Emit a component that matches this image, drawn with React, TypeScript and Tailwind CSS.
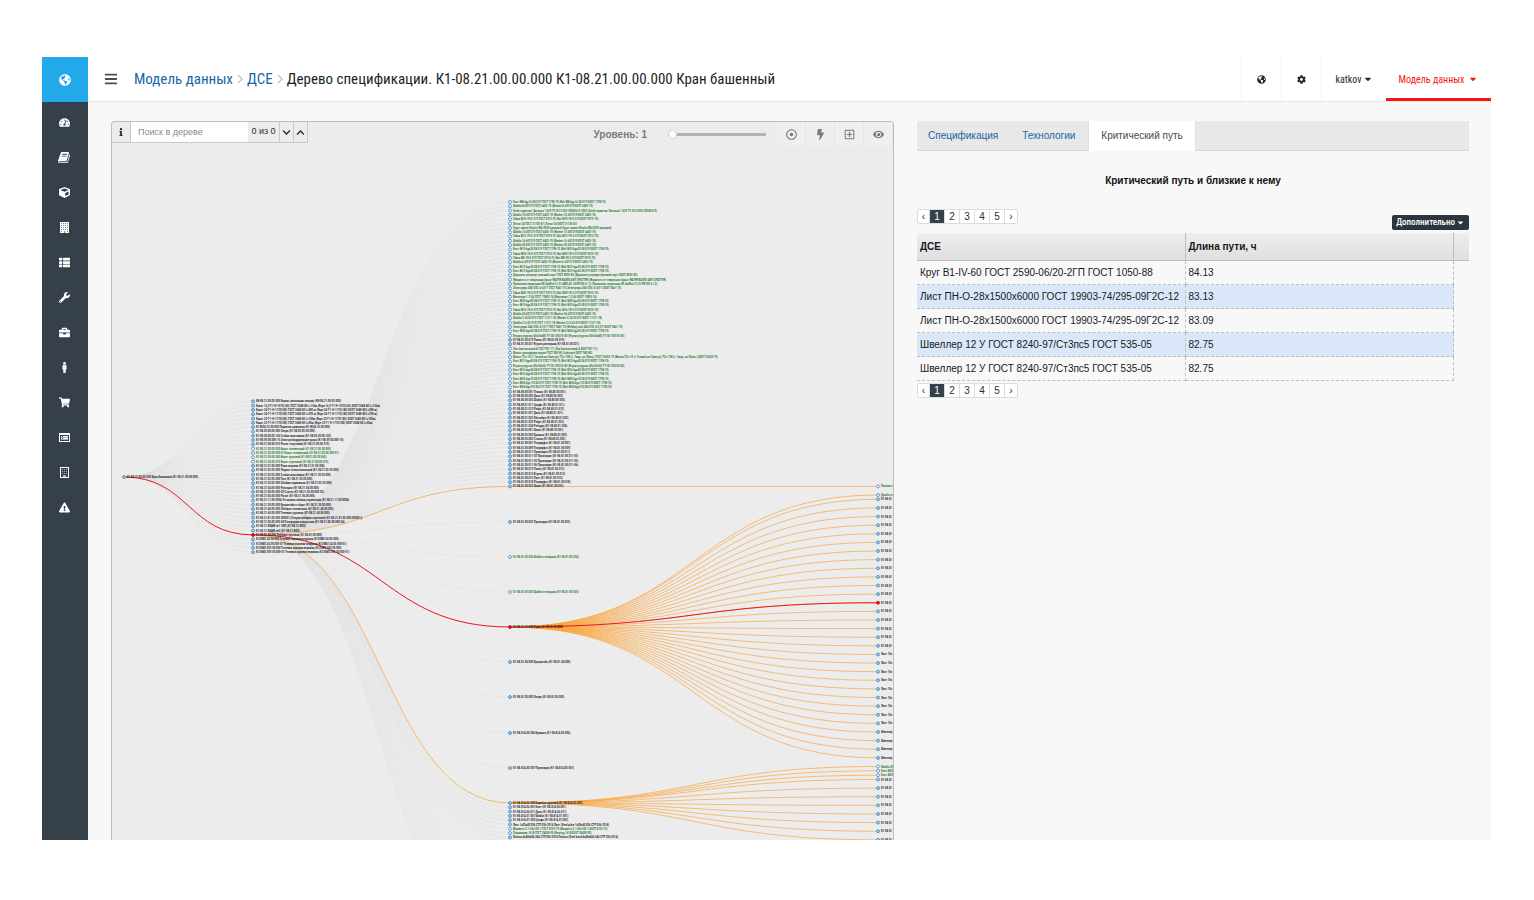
import type { ReactNode } from 'react';
import clsx from 'clsx';
import {
  FaBars,
  FaBolt,
  FaBriefcase,
  FaCaretDown,
  FaChevronDown,
  FaChevronUp,
  FaCog,
  FaCube,
  FaExclamationTriangle,
  FaEye,
  FaGlobeAmericas,
  FaInfo,
  FaMale,
  FaRegDotCircle,
  FaRegPlusSquare,
  FaShoppingCart,
  FaTachometerAlt,
  FaThList,
  FaWrench,
} from 'react-icons/fa';

function BookIcon() {
  return (
    <svg viewBox="0 0 1792 1792" width="13" height="13" fill="currentColor">
      <path d="M1639 478q40 57 18 129l-275 906q-19 64-76.5 107.5t-122.5 43.5h-923q-77 0-148.5-53.5t-99.5-131.5q-24-67-2-127 0-4 3-27t4-37q1-8-3-21.5t-3-19.5q2-11 8-21t16.5-23.5 16.5-23.5q23-38 45-91.5t30-91.5q3-10 .5-30t-.5-28q3-11 17-28t17-23q21-36 42-92t25-90q1-9-2.5-32t.5-28q4-13 22-30.5t22-22.5q19-26 42.5-84.5t27.5-96.5q1-8-3-25.5t-2-26.5q2-8 9-18t18-23 17-21q8-12 16.5-30.5t15-35 16-36 19.5-32 26.5-23.5 36-11.5 47.5 5.5l-1 3q38-9 51-9h761q74 0 114 56t18 130l-274 906q-36 119-71.5 153.5t-128.5 34.5h-869q-27 0-38 15-11 16-1 43 24 70 144 70h923q29 0 56-15.5t35-41.5l300-987q7-22 5-57 38 15 59 43zm-1064 2q-4 13 2 22.5t20 9.5h608q13 0 25.5-9.5t16.5-22.5l21-64q4-13-2-22.5t-20-9.5h-608q-13 0-25.5 9.5t-16.5 22.5zm-83 256q-4 13 2 22.5t20 9.5h608q13 0 25.5-9.5t16.5-22.5l21-64q4-13-2-22.5t-20-9.5h-608q-13 0-25.5 9.5t-16.5 22.5z" />
    </svg>
  );
}

function TowerIcon() {
  return (
    <svg viewBox="0 0 9 11" width="9" height="11" shapeRendering="crispEdges">
      <path fill="currentColor" d="M0 0h9v11H0z" />
      <path
        fill="#7b838b"
        d="M1 1h1v1H1zM3 1h1v1H3zM5 1h1v1H5zM7 1h1v1H7zM1 3h1v1H1zM3 3h1v1H3zM5 3h1v1H5zM7 3h1v1H7zM1 5h1v1H1zM3 5h1v1H3zM5 5h1v1H5zM7 5h1v1H7zM1 7h1v1H1zM3 7h1v1H3zM5 7h1v1H5zM7 7h1v1H7zM1 9h1v1H1zM4 9h1v2H4zM7 9h1v1H7z"
      />
    </svg>
  );
}

function TowerOutlineIcon() {
  return (
    <svg viewBox="0 0 9 11" width="9" height="11" shapeRendering="crispEdges">
      <path fill="none" stroke="currentColor" d="M.5.5h8v10h-8z" />
      <path
        fill="#aab0b6"
        d="M2 2h1v1H2zM4 2h1v1H4zM6 2h1v1H6zM2 4h1v1H2zM4 4h1v1H4zM6 4h1v1H6zM2 6h1v1H2zM4 6h1v1H4zM6 6h1v1H6zM3 8h3v2H3z"
      />
    </svg>
  );
}

function ListAltIcon() {
  return (
    <svg viewBox="0 0 11 9" width="11" height="9" shapeRendering="crispEdges">
      <path fill="none" stroke="currentColor" d="M.5.5h10v8H.5z" />
      <path fill="currentColor" d="M0 0h11v2H0zM2 3h1v1H2zM4 3h5v1H4zM2 5h1v1H2zM4 5h5v1H4z" />
      <path fill="#aab0b6" d="M2 4h7v1H2zM2 6h7v1H2z" />
    </svg>
  );
}

const MENU: { label: string; icon: ReactNode }[] = [
  { label: 'Панель', icon: <FaTachometerAlt /> },
  { label: 'Справочники', icon: <BookIcon /> },
  { label: 'Изделия', icon: <FaCube /> },
  { label: 'Подразделения', icon: <TowerIcon /> },
  { label: 'Списки', icon: <FaThList /> },
  { label: 'Оборудование', icon: <FaWrench /> },
  { label: 'Заказы', icon: <FaBriefcase /> },
  { label: 'Персонал', icon: <FaMale /> },
  { label: 'Закупки', icon: <FaShoppingCart /> },
  { label: 'Отчёты', icon: <ListAltIcon /> },
  { label: 'Предприятие', icon: <TowerOutlineIcon /> },
  { label: 'Предупреждения', icon: <FaExclamationTriangle /> },
];

function Sidebar() {
  return (
    <aside className="flex w-[46px] shrink-0 flex-col bg-[#36404a]">
      <a
        href="#"
        aria-label="Главная"
        className="flex h-[45px] items-center justify-center bg-[#22a9ea] pr-px text-xs text-white"
      >
        <FaGlobeAmericas />
      </a>
      <nav className="flex flex-col pt-[3px]">
        {MENU.map((item) => (
          <a
            key={item.label}
            href="#"
            aria-label={item.label}
            className="flex h-[35px] items-center justify-center pr-[2px] text-[11px] text-white"
          >
            {item.icon}
          </a>
        ))}
      </nav>
    </aside>
  );
}

function Header() {
  const cell = 'flex h-full items-center justify-center border-l border-[#f2f2f2]';
  return (
    <header className="flex h-[45px] items-center border-b border-[#e6e6e6] bg-white pl-4 font-['Roboto_Condensed',Roboto,sans-serif]">
      <button type="button" aria-label="Меню" className="text-sm text-[#4a4f57]">
        <FaBars />
      </button>
      <h1 className="ml-4 flex flex-1 items-center gap-1 text-[15px] whitespace-nowrap text-[#1a1f26]">
        <a href="#" className="text-[#1766a6]">
          Модель данных
        </a>
        <Separator />
        <a href="#" className="text-[#1766a6]">
          ДСЕ
        </a>
        <Separator />
        <span>Дерево спецификации. К1-08.21.00.00.000 К1-08.21.00.00.000 Кран башенный</span>
      </h1>
      <button type="button" aria-label="Язык" className={clsx(cell, 'w-10 text-[9px] text-[#1f2933]')}>
        <FaGlobeAmericas />
      </button>
      <button type="button" aria-label="Настройки" className={clsx(cell, 'w-10 text-[9px] text-[#1f2933]')}>
        <FaCog />
      </button>
      <button type="button" className={clsx(cell, 'w-[65px] gap-px text-[10px] text-[#1f2933]')}>
        katkov <FaCaretDown />
      </button>
      <button
        type="button"
        className="flex h-full w-[105px] items-center justify-center gap-1 border-b-3 border-[#f5180f] pt-[3px] text-[10px] text-[#f5180f]"
      >
        Модель данных <FaCaretDown />
      </button>
    </header>
  );
}

function Separator() {
  return (
    <svg viewBox="0 0 6 10" width="6" height="10" fill="none" stroke="#c4c4c4" strokeWidth="1.4">
      <path d="M1 1 5 5 1 9" />
    </svg>
  );
}

/* ---------- specification tree ---------- */

const STEP = 4.31;
const COL = { root: 12, a: 141, b: 398, c: 766 };
const ROOT_Y = 355;
const ORANGE = '#fba53c';
const RED = '#f0141e';

type Kind = 'part' | 'bought' | 'critical';
interface TreeNode {
  y: number;
  text: string;
  kind: Kind;
}

const LEVEL_A = [
  'К8-08.21.00.00.000 Башня (наклонная секция) (К8-08.21.00.00.000)',
  'Канат 16,5-Г-1-Н-1570(160) ГОСТ 2688-80 L=136м (Rope 16,5-Г-1-Н-1570(160) GOST 2688-80 L=136м)',
  'Канат 24-Г-1-Н-1770(180) ГОСТ 2688-80 L=280 м (Rope 24-Г-1-Н-1770(180) GOST 2688-80 L=280 м)',
  'Канат 24-Г-1-Н-1770(180) ГОСТ 2688-80 L=290 м (Rope 24-Г-1-Н-1770(180) GOST 2688-80 L=290 м)',
  'Канат 32-Г-1-Н-1770(180) ГОСТ 2688-80 L=100м (Rope 32-Г-1-Н-1770(180) GOST 2688-80 L=100м)',
  'Канат 32-Г-1-Н-1770(180) ГОСТ 2688-80 L=50м (Rope 32-Г-1-Н-1770(180) GOST 2688-80 L=50м)',
  'К1-ЮЭ4.10.00.000 Подвеска крюковая (К1-ЮЭ4.10.00.000)',
  'К1-08.02.00.00.000 Опора (К1-08.02.00.00.000)',
  'К1-08.05.00.00.160 Стойка монтажная (К1-08.05.00.00.160)',
  'К1-08.09.00.000-10 Электрооборудование крана (К1-08.09.00.000-10)',
  'К1-08.21.00.00.010 Рычаг стартовый (К1-08.21.00.00.010)',
  'К1-08.21.00.00.050 Канат тележечный (К1-08.21.00.00.050)',
  'К1-08.21.00.00.050-01 Канат тележечный (К1-08.21.00.00.050-01)',
  'К1-08.21.00.00.060 Канат грузовой (К1-08.21.00.00.060)',
  'К1-08.21.00.00.070 Канат стреловой (К1-08.21.00.00.070)',
  'К1-08.21.01.00.000 Рама ходовая (К1-08.21.01.00.000)',
  'К1-08.21.02.02.000 Подкос телескопический (К1-08.21.02.02.000)',
  'К1-08.21.02.03.000 Стойка монтажная (К1-08.21.02.03.000)',
  'К1-08.21.02.05.000 Тяга (К1-08.21.02.05.000)',
  'К1-08.21.03.02.000 Обойма подвижная (К1-08.21.03.02.000)',
  'К1-08.21.04.00.000 Распорка (К1-08.21.04.00.000)',
  'К1-08.21.05.00.000-02 Стрела (К1-08.21.05.00.000-02)',
  'К1-08.21.06.00.000 Рычаг (К1-08.21.06.00.000)',
  'К1-08.21.11.00.000А Установка кабины управления (К1-08.21.11.00.000А)',
  'К1-08.21.30.00.000 Кронштейн в сборе (К1-08.21.30.00.000)',
  'К1-08.21.40.00.000 Лебёдка тележечная (К1-08.21.40.00.000)',
  'К1-08.21.60.00.000 Тележка грузовая (К1-08.21.60.00.000)',
  'К1-08.21.81.00.000 (N0001) Опорка лебёдки стреловой (К1-08.21.81.00.000 (N0001))',
  'К1-08.21.85.00.000-04 Платформа поворотная (К1-08.21.85.00.000-04)',
  'К1-08.21.ЯЩИК №1 ЗИП (К1-08.21.BOX)',
  'К1-08.21.ЯЩИК №2 (К1-08.21.BOX)',
  'К1-08.81.00.000 Лебёдка грузовая (К1-08.81.00.000)',
  'К120М2.24.00.000 Тележка ходовая ведущая (К120М2.24.00.000)',
  'К120М2.24.00.000-01 Тележка ходовая ведущая (К120М2.24.00.000-01)',
  'К120М2.559.00.000 Тележка ходовая ведомая (К120М2.559.00.000)',
  'К120М2.559.00.000-01 Тележка ходовая ведомая (К120М2.559.00.000-01)',
];

const LEVEL_B = [
  'Болт М8-6gx16.58.019 ГОСТ 7798-70 (Bolt M8-6gx16.58.019 GOST 7798-70)',
  'Шайба 8.65Г.019 ГОСТ 6402-70 (Washer 8.65Г.019 GOST 6402-70)',
  'Клей-герметик "Автокон" 1625 ТУ 2513-003-50942619-2002 (Клей-герметик "Автокон" 1625 ТУ 2513-003-50942619)',
  'Шайба 10.65Г.019 ГОСТ 6402-70 (Washer 10.65Г.019 GOST 6402-70)',
  'Гайка М10-7Н.5.019 ГОСТ 5915-70 (Nut M10-7Н.5.019 GOST 5915-70)',
  'Лоток-24 ГОСТ 21150-87 (Лоток-24 GOST 21150-87)',
  'Грунт-эмаль Hicolor RAL3020 красный (Грунт-эмаль Hicolor RAL3020 красный)',
  'Шайба 12.65Г.019 ГОСТ 6402-70 (Washer 12.65Г.019 GOST 6402-70)',
  'Гайка М12-7Н.5.019 ГОСТ 5915-70 (Nut M12-7Н.5.019 GOST 5915-70)',
  'Шайба 16.65Г.019 ГОСТ 6402-70 (Washer 16.65Г.019 GOST 6402-70)',
  'Шайба 20.65Г.019 ГОСТ 6402-70 (Washer 20.65Г.019 GOST 6402-70)',
  'Болт М10-6gx20.58.019 ГОСТ 7798-70 (Bolt M10-6gx20.58.019 GOST 7798-70)',
  'Гайка М20-7Н.5.019 ГОСТ 5915-70 (Nut M20-7Н.5.019 GOST 5915-70)',
  'Гайка М8-7Н.5.019 ГОСТ 5915-70 (Nut M8-7Н.5.019 GOST 5915-70)',
  'Шайба 6.65Г.019 ГОСТ 6402-70 (Washer 6.65Г.019 GOST 6402-70)',
  'Болт М12-6gx30.58.019 ГОСТ 7798-70 (Bolt M12-6gx30.58.019 GOST 7798-70)',
  'Болт М12-6gx45.58.019 ГОСТ 7798-70 (Bolt M12-6gx45.58.019 GOST 7798-70)',
  'Двуокись углерода (высший сорт) ГОСТ 8050-85 (Двуокись углерода (высший сорт) GOST 8050-85)',
  'Жидкость от сварочных брызг WATER BASED ANTI SPATTER (Жидкость от сварочных брызг WATER BASED ANTI SPATTER)',
  'Проволока сварочная OK AutRod 12.51 AWS A5.18 ER70S-6 1,2 (Проволока сварочная OK AutRod 12.51 ER70S-6 1,2)',
  'Электроды Э46-ОЗС-4-4,0-Г ГОСТ 9467-75 (Электроды Э46-ОЗС-4-4,0-Г GOST 9467-75)',
  'Гайка М20-7Н.5.019 ГОСТ 5915-70 (Nut M20-7Н.5.019 GOST 5915-70)',
  'Масленка 1.2.Ц6 ГОСТ 19853-74 (Масленка 1.2.Ц6 GOST 19853-74)',
  'Болт М20-6gx50.58.019 ГОСТ 7798-70 (Bolt M20-6gx50.58.019 GOST 7798-70)',
  'Болт М10-6gx30.58.019 ГОСТ 7798-70 (Bolt M10-6gx30.58.019 GOST 7798-70)',
  'Гайка М16-7Н.5.019 ГОСТ 5915-70 (Nut M16-7Н.5.019 GOST 5915-70)',
  'Шайба 24.65Г.019 ГОСТ 6402-70 (Washer 24.65Г.019 GOST 6402-70)',
  'Шайба С 24.02.019 ГОСТ 11371-78 (Washer С 24.02.019 GOST 11371-78)',
  'Шайба С16.02.019 ГОСТ 11371-78 (Washer С16.02.019 GOST 11371-78)',
  'Электроды Э46-ОЗС-4-3,0-Г ГОСТ 9467-75 (Welding rods Э46-ОЗС-4-3,0-Г GOST 9467-75)',
  'Болт М24-6gx55.58.019 ГОСТ 7798-70 (Bolt M24-6gx55.58.019 GOST 7798-70)',
  'Втулка упругая (60х36х80) ТУ 38 105376-82 (Втулка упругая (60х36х80) ТУ 38 105376-82)',
  'К1-08.81.00.019 Палец (К1-08.81.00.019)',
  'К1-08.81.00.021 Втулка распорная (К1-08.81.00.021)',
  'Лак бакелитовый А ГОСТ 901-71 (Лак бакелитовый А GOST 901-71)',
  'Масло трансформаторное ГОСТ 982-80 (Lubricant GOST 982-80)',
  'Масло ТСп-10 (t. Гелиоб на t7мастр); ТСп-15К (t. 7мар. на 30сек.) ГОСТ 23652-79 (Масло ТСп-10 (t. Гелиоб на t7мастр); ТСп-15К (t. 7мар. на 30сек.) GOST 23652-79)',
  'Болт М12-6gx40.58.019 ГОСТ 7798-70 (Bolt M12-6gx40.58.019 GOST 7798-70)',
  'Втулка упругая (45х20х36) ТУ 38 105376-82 (Втулка упругая (45х20х36) ТУ 38 105376-82)',
  'Болт М16-6gx45.58.019 ГОСТ 7798-70 (Bolt M16-6gx45.58.019 GOST 7798-70)',
  'Болт М16-6gx60.58.019 ГОСТ 7798-70 (Bolt M16-6gx60.58.019 GOST 7798-70)',
  'Болт М20-6gx70.58.019 ГОСТ 7798-70 (Bolt M20-6gx70.58.019 GOST 7798-70)',
  'Болт М24-6gx110.58.019 ГОСТ 7798-70 (Bolt M24-6gx110.58.019 GOST 7798-70)',
  'Болт М24-6gx210.58.019 ГОСТ 7798-70 (Bolt M24-6gx210.58.019 GOST 7798-70)',
  'К1-08.80.00.001 Планка (К1-08.80.00.001)',
  'К1-08.80.00.002 Диск (К1-08.80.00.002)',
  'К1-08.80.00.003 Шайба (К1-08.80.00.003)',
  'К1-08.80.01.011 Цапфа (К1-08.80.01.011)',
  'К1-08.80.01.012 Ребро (К1-08.80.01.012)',
  'К1-08.80.01.021 Диск (К1-08.80.01.021)',
  'К1-08.80.01.022 Обечайка (К1-08.80.01.022)',
  'К1-08.80.01.023 Ребро (К1-08.80.01.023)',
  'К1-08.80.01.024 Реборда (К1-08.80.01.024)',
  'К1-08.80.03.001 Шкив (К1-08.80.03.001)',
  'К1-08.80.03.002 Крышка (К1-08.80.03.002)',
  'К1-08.80.03.003 Стакан (К1-08.80.03.003)',
  'К1-08.81.00.001 Полумуфта (К1-08.81.00.001)',
  'К1-08.81.00.009 Полумуфта (К1-08.81.00.009)',
  'К1-08.81.00.011 Прокладка (К1-08.81.00.011)',
  'К1-08.81.00.011-02 Прокладка (К1-08.81.00.011-02)',
  'К1-08.81.00.011-03 Прокладка (К1-08.81.00.011-03)',
  'К1-08.81.00.011-06 Прокладка (К1-08.81.00.011-06)',
  'К1-08.81.00.012 Палец (К1-08.81.00.012)',
  'К1-08.81.00.013 Втулка (К1-08.81.00.013)',
  'К1-08.81.00.015 Лист (К1-08.81.00.015)',
  'К1-08.81.00.018 Полумуфта (К1-08.81.00.018)',
  'К1-08.81.00.022 Шкив (К1-08.81.00.022)',
];

const LEVEL_B_SPARSE: TreeNode[] = [
  { y: 400, text: 'К1-08.81.00.023 Прокладка (К1-08.81.00.023)', kind: 'part' },
  { y: 435, text: 'К1-08.81.00.024 Шайба стопорная (К1-08.81.00.024)', kind: 'bought' },
  { y: 470, text: 'К1-08.81.00.025 Шайба стопорная (К1-08.81.00.025)', kind: 'bought' },
  { y: 505, text: 'К1-08.81.02.000 Рама (К1-08.81.02.000)', kind: 'critical' },
  { y: 540, text: 'К1-08.81.04.000 Кронштейн (К1-08.81.04.000)', kind: 'part' },
  { y: 575, text: 'К1-08.81.05.000 Опора (К1-08.81.05.000)', kind: 'part' },
  { y: 611, text: 'К1-08.81А.00.006 Крышка (К1-08.81А.00.006)', kind: 'part' },
  { y: 646, text: 'К1-08.81А.00.007 Прокладка (К1-08.81А.00.007)', kind: 'part' },
];

const LEVEL_B_TAIL = [
  'К1-08.81А.03.000 Барабан грузовой (К1-08.81А.03.000)',
  'К1-08.81А.06.001 Болт (К1-08.81А.06.001)',
  'К1-08.81А.06.011 Диск (К1-08.81А.06.011)',
  'К1-08.81А.07.001 Шайба (К1-08.81А.07.001)',
  'К1-08.81А.07.002 Цапфа (К1-08.81А.07.002)',
  'Лист 1х20х40.026 СТП 036-2014 Лист (Steel plate 1х20х40.026 СТР 036-2014)',
  'Манжета 2.1-60х100-1 ГОСТ 8752-79 (Манжета 2.1-60х100-1 GOST 8752-79)',
  'Подшипник 1618 ГОСТ 28428-90 (Bearing 1618 GOST 28428-90)',
  'Полоса 4х40х606.246 СТП 036-2014 Полоса (Steel band 4х40х606.246 СТР 036-2014)',
];

const levelA: TreeNode[] = LEVEL_A.map((text, i) => ({
  y: 279.3 + i * STEP,
  text,
  kind: i === 31 ? 'critical' : i > 10 && i < 15 ? 'bought' : 'part',
}));

const levelB: TreeNode[] = [
  ...LEVEL_B.map((text, i): TreeNode => ({
    y: 80 + i * STEP,
    text,
    kind: i < 32 || (i > 33 && i < 44) ? 'bought' : 'part',
  })),
  ...LEVEL_B_SPARSE,
  ...LEVEL_B_TAIL.map((text, i): TreeNode => ({
    y: 681 + i * STEP,
    text,
    kind: i === 6 || i === 7 ? 'bought' : 'part',
  })),
];

const frameParts: TreeNode[] = [
  { y: 373, text: 'Дробь ста', kind: 'bought' },
  ...Array.from({ length: 31 }, (_, i): TreeNode => ({
    y: 377.3 + i * STEP * 2,
    text: i < 18 ? 'К1-08.81' : i < 27 ? 'Лист 10х' : 'Швеллер',
    kind: i === 12 ? 'critical' : 'part',
  })),
];

const drumParts: TreeNode[] = [
  { y: 644.5, text: 'Шайба 20', kind: 'bought' },
  { y: 648.8, text: 'Болт М20', kind: 'bought' },
  { y: 653.2, text: 'Болт М20', kind: 'bought' },
  ...Array.from({ length: 8 }, (_, i): TreeNode => ({
    y: 657.5 + i * STEP * 2,
    text: 'К1-08.81',
    kind: 'part',
  })),
];

const winchY = levelA[31].y;
const shaftY = levelB[66].y;
const frameY = 505;
const drumY = 681;

function link(x1: number, y1: number, x2: number, y2: number) {
  const mid = (x1 + x2) / 2;
  return `M${x1} ${y1}C${mid} ${y1} ${mid} ${y2} ${x2} ${y2}`;
}

function Nodes({ x, items }: { x: number; items: TreeNode[] }) {
  return (
    <>
      {items.map((n) => (
        <g key={n.y}>
          <circle
            cx={x}
            cy={n.y}
            r="1.5"
            strokeWidth="0.8"
            stroke={n.kind === 'critical' ? '#a8101c' : '#3d84bd'}
            fill={n.kind === 'critical' ? RED : n.kind === 'bought' ? '#fff' : '#a9cdea'}
          />
          <text x={x + 3} y={n.y + 1} fill={n.kind === 'bought' ? '#0f6e20' : '#0c0c14'}>
            {n.text}
          </text>
        </g>
      ))}
    </>
  );
}

function SpecTree() {
  return (
    <svg
      className="absolute inset-0 h-full w-full font-['Roboto_Condensed','Liberation_Sans',sans-serif] text-[3px] font-medium"
      role="img"
      aria-label="Дерево спецификации"
    >
      <g fill="none" stroke="#dfdfdf" strokeWidth="0.5">
        {levelA.map((n) => (
          <path key={n.y} d={link(COL.root, ROOT_Y, COL.a, n.y)} />
        ))}
        {levelB.map((n) => (
          <path key={n.y} d={link(COL.a, winchY, COL.b, n.y)} />
        ))}
        {Array.from({ length: 14 }, (_, i) => (
          <path key={i} d={link(COL.a, winchY, COL.b, 720 + i * STEP * 2)} />
        ))}
      </g>
      <g fill="none" stroke={ORANGE} strokeWidth="0.7">
        <path d={link(COL.a, winchY, COL.b, shaftY)} />
        <path d={link(COL.a, winchY, COL.b, drumY)} />
        <path d={link(COL.b, shaftY, COL.c, shaftY)} />
        {frameParts.map((n) => (
          <path key={n.y} d={link(COL.b, frameY, COL.c, n.y)} />
        ))}
        {drumParts.map((n) => (
          <path key={n.y} d={link(COL.b, drumY, COL.c, n.y)} />
        ))}
      </g>
      <g fill="none" stroke={RED} strokeWidth="1">
        <path d={link(COL.root, ROOT_Y, COL.a, winchY)} />
        <path d={link(COL.a, winchY, COL.b, frameY)} />
        <path d={link(COL.b, frameY, COL.c, frameParts[13].y)} />
      </g>
      <Nodes
        x={COL.root}
        items={[{ y: ROOT_Y, text: 'К1-08.21.00.00.000 Кран Башенный (К1-08.21.00.00.000)', kind: 'part' }]}
      />
      <Nodes x={COL.a} items={levelA} />
      <Nodes x={COL.b} items={levelB} />
      <Nodes x={COL.c} items={[{ y: shaftY, text: 'Поковка Ф', kind: 'bought' }, ...frameParts, ...drumParts]} />
    </svg>
  );
}

const TOOLS: { label: string; icon: ReactNode }[] = [
  { label: 'Центрировать', icon: <FaRegDotCircle /> },
  { label: 'Критический путь', icon: <FaBolt /> },
  { label: 'Развернуть', icon: <FaRegPlusSquare /> },
  { label: 'Показать', icon: <FaEye /> },
];

function TreePanel() {
  return (
    <section className="relative overflow-hidden rounded-t-sm border border-b-0 border-[#bdbdbd] bg-[#ececec]">
      <SpecTree />
      <div className="relative flex items-start justify-between font-['Liberation_Sans',sans-serif]">
        <div className="flex h-[21px] items-stretch border-r border-b border-[#c9c9c9] text-[9px] text-[#2b2b2b]">
          <button type="button" aria-label="Справка" className="flex w-[19px] items-center justify-center border-r border-[#c9c9c9] text-[8px]">
            <FaInfo />
          </button>
          <input
            type="text"
            aria-label="Поиск в дереве"
            placeholder="Поиск в дереве"
            className="w-[117px] bg-white px-[7px] pt-px outline-none placeholder:text-[#8a8a8a]"
          />
          <span className="flex w-[31px] items-center justify-center whitespace-nowrap">0 из 0</span>
          <button type="button" aria-label="Следующий" className="flex w-[14px] items-center justify-center border-l border-[#c9c9c9]">
            <FaChevronDown />
          </button>
          <button type="button" aria-label="Предыдущий" className="flex w-[14px] items-center justify-center border-l border-[#c9c9c9]">
            <FaChevronUp />
          </button>
        </div>
        <div className="flex h-6 items-center text-[#7a7a7a]">
          <label htmlFor="level" className="text-[10px] font-bold">
            Уровень: 1
          </label>
          <input
            id="level"
            type="range"
            min="1"
            max="10"
            defaultValue="1"
            className="mr-[11px] ml-[21px] h-[3px] w-[98px] appearance-none bg-[#b3b3b3] [&::-webkit-slider-thumb]:size-[9px] [&::-webkit-slider-thumb]:appearance-none [&::-webkit-slider-thumb]:rounded-full [&::-webkit-slider-thumb]:border [&::-webkit-slider-thumb]:border-[#d4d4d4] [&::-webkit-slider-thumb]:bg-white"
          />
          {TOOLS.map((tool) => (
            <button
              key={tool.label}
              type="button"
              aria-label={tool.label}
              className="flex h-6 w-[29px] items-center justify-center border-r border-[#e6e6e6] bg-[#efefef] text-[11px]"
            >
              {tool.icon}
            </button>
          ))}
        </div>
      </div>
    </section>
  );
}

/* ---------- critical path ---------- */

const ROWS = [
  ['Круг В1-IV-60 ГОСТ 2590-06/20-2ГП ГОСТ 1050-88', '84.13'],
  ['Лист ПН-О-28х1500х6000 ГОСТ 19903-74/295-09Г2С-12', '83.13'],
  ['Лист ПН-О-28х1500х6000 ГОСТ 19903-74/295-09Г2С-12', '83.09'],
  ['Швеллер 12 У ГОСТ 8240-97/Ст3пс5 ГОСТ 535-05', '82.75'],
  ['Швеллер 12 У ГОСТ 8240-97/Ст3пс5 ГОСТ 535-05', '82.75'],
];

function Pager() {
  return (
    <nav className="flex h-[15px] divide-x divide-[#dcdcdc] overflow-hidden rounded-xs border border-[#dcdcdc] bg-white text-[10px] text-[#26303a]">
      {['‹', '1', '2', '3', '4', '5', '›'].map((p) => (
        <button
          key={p}
          type="button"
          className={clsx(
            'flex items-center justify-center',
            p === '‹' || p === '›' ? 'w-3' : 'w-[15px]',
            p === '1' && 'bg-[#36404a] text-white',
          )}
        >
          {p}
        </button>
      ))}
    </nav>
  );
}

function CriticalPath() {
  return (
    <section className="font-['Liberation_Sans',sans-serif]">
      <div className="flex h-[30px] border-b border-[#d9d9d9] bg-[#e8e8e8] text-[10px]">
        <button type="button" className="px-[11px] pb-px text-[#1766a6]">
          Спецификация
        </button>
        <button type="button" className="mx-[2px] px-[11px] pb-px text-[#1766a6]">
          Технологии
        </button>
        <button type="button" className="h-[30px] border-x border-[#dedede] bg-white px-3 pb-[2px] text-[#4a4a4a]">
          Критический путь
        </button>
      </div>
      <h2 className="mt-[22px] text-center text-[10px] leading-4 font-bold text-[#111]">
        Критический путь и близкие к нему
      </h2>
      <div className="mt-5 flex h-6 items-start justify-between">
        <Pager />
        <button
          type="button"
          className="mt-[6px] flex h-[15px] items-center gap-px rounded-xs bg-[#2d3640] px-1 font-['Roboto_Condensed',Roboto,sans-serif] text-[9px] font-medium text-white"
        >
          Дополнительно <FaCaretDown />
        </button>
      </div>
      <table className="w-full table-fixed border-separate border-spacing-0 text-left text-[10px] text-[#16191d]">
        <thead>
          <tr className="h-[28px] bg-linear-to-b from-[#eeeeee] to-[#dedede] font-bold">
            <th className="border-r border-b border-[#bdbdbd] px-[3px]">ДСЕ</th>
            <th className="border-r border-b border-[#bdbdbd] px-[3px]">Длина пути, ч</th>
            <th className="w-[15px] border-b border-[#bdbdbd]" />
          </tr>
        </thead>
        <tbody>
          {ROWS.map(([name, length], i) => (
            <tr key={i} className="h-6">
              <td className={clsx('border-r border-b border-dashed border-[#bdbdbd] px-[3px] whitespace-nowrap', i % 2 === 1 && 'bg-[#dae7f8]')}>
                {name}
              </td>
              <td className={clsx('border-r border-b border-dashed border-[#bdbdbd] px-[3px]', i % 2 === 1 && 'bg-[#dae7f8]')}>
                {length}
              </td>
              <td />
            </tr>
          ))}
        </tbody>
      </table>
      <div className="mt-[2px] flex">
        <Pager />
      </div>
    </section>
  );
}

export default function App() {
  return (
    <div className="flex h-screen min-h-[600px] bg-white pt-[57px] pr-[43px] pb-[60px] pl-[42px]">
      <Sidebar />
      <div className="flex min-w-0 flex-1 flex-col bg-[#f8f8f8]">
        <Header />
        <main className="grid min-h-0 flex-1 grid-cols-[783fr_552fr] gap-x-[23px] pt-[19px] pr-[22px] pl-[23px]">
          <TreePanel />
          <CriticalPath />
        </main>
      </div>
    </div>
  );
}
